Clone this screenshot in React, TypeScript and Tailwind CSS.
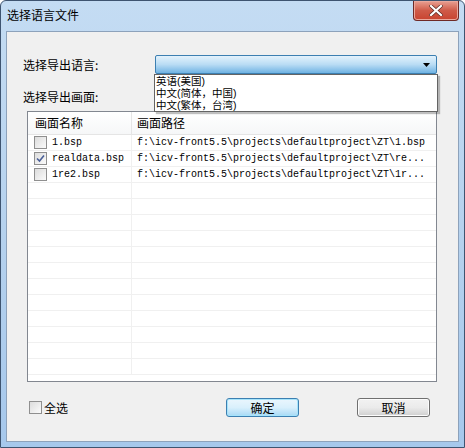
const cjk = "font-['Noto_Sans_CJK_SC',sans-serif]";
const mono = "font-['Liberation_Mono','Noto_Sans_CJK_SC',monospace]";
const list = "font-['Liberation_Sans','Noto_Sans_CJK_SC',sans-serif]";

const rows = [
  { name: '1.bsp', path: 'f:\\icv-front5.5\\projects\\defaultproject\\ZT\\1.bsp', checked: false },
  { name: 'realdata.bsp', path: 'f:\\icv-front5.5\\projects\\defaultproject\\ZT\\re...', checked: true },
  { name: '1re2.bsp', path: 'f:\\icv-front5.5\\projects\\defaultproject\\ZT\\1r...', checked: false },
];

const Check = ({ checked }: { checked?: boolean }) => (
  <div className="flex h-[13px] w-[13px] items-center justify-center border border-[#8f8f8f] bg-gradient-to-br from-[#dcdcdc] to-[#fbfbfb]">
    {checked && (
      <svg width="9" height="9" viewBox="0 0 9 9">
        <path d="M1 4.5 L3.5 7 L8 1.5" fill="none" stroke="#4a5f97" strokeWidth="1.6" />
      </svg>
    )}
  </div>
);

const Button = ({ label, focused }: { label: string; focused?: boolean }) => (
  <div
    className={`flex h-[19px] w-[73px] items-center justify-center rounded-[3px] border text-[12px] leading-none text-black ${cjk} ${
      focused
        ? 'border-[#3c7fb1] bg-gradient-to-b from-[#eaf6fd] via-[#d9f0fc] to-[#a7d9f5] shadow-[inset_0_0_0_1px_#a6e4fb]'
        : 'border-[#707070] bg-gradient-to-b from-[#f2f2f2] via-[#ebebeb] to-[#cfcfcf] shadow-[inset_0_0_0_1px_#fcfcfc]'
    }`}
  >
    {label}
  </div>
);

export default function App() {
  return (
    <div className="flex h-[448px] w-[465px] flex-col overflow-hidden rounded-t-[6px] border border-[#3e5470] bg-gradient-to-b from-[#c4dcf3] via-[#b6d2ee] to-[#a6c8ec]">
      {/* title bar */}
      <div className="flex h-[30px] shrink-0 items-start justify-between">
        <div className={`pl-[6px] pt-[5px] text-[12px] text-black ${cjk}`}>选择语言文件</div>
        <div className="mr-[5px] flex h-[20px] w-[46px] items-center justify-center rounded-b-[4px] border border-t-0 border-[#6e2a26] bg-gradient-to-b from-[#e8a093] via-[#cf5a48] to-[#c8432f] shadow-[inset_0_0_0_1px_#eaa89c]">
          <svg width="14" height="11" viewBox="0 0 14 11">
            <path d="M2 1 L12 10 M12 1 L2 10" stroke="#5b2a24" strokeWidth="3.6" strokeLinecap="square" />
            <path d="M2 1 L12 10 M12 1 L2 10" stroke="#ffffff" strokeWidth="2.2" strokeLinecap="square" />
          </svg>
        </div>
      </div>

      {/* client area */}
      <div className="relative mx-[5px] mb-[5px] flex flex-1 flex-col border border-[#8da2bb] bg-[#f0f0f0]">
        <div className="mt-[23px] flex items-center">
          <div className={`ml-[16px] w-[132px] text-[12px] text-black ${cjk}`}>选择导出语言:</div>
          <div className="relative flex h-[19px] w-[282px] items-center justify-end rounded-[2px] border border-[#3c7fb1] bg-gradient-to-b from-[#e3f2fc] via-[#b9dcf4] to-[#6fb3e3] pr-[6px]">
            <svg width="7" height="4" viewBox="0 0 7 4">
              <path d="M0 0 H7 L3.5 4 Z" fill="#000" />
            </svg>
          </div>
        </div>

        {/* dropdown list */}
        <div
          className={`absolute left-[147px] top-[42px] z-10 flex h-[38px] w-[284px] flex-col border border-[#646464] bg-white pl-[1px] text-[10.5px] leading-[12px] text-black shadow-[2px_2px_1px_rgba(0,0,0,0.25)] ${list}`}
        >
          <div className="h-[12px]">英语(美国)</div>
          <div className="h-[12px]">中文(简体，中国)</div>
          <div className="h-[12px]">中文(繁体，台湾)</div>
        </div>

        <div className={`ml-[16px] mt-[14px] text-[12px] text-black ${cjk}`}>选择导出画面:</div>

        {/* table */}
        <div className="ml-[20px] mt-[5px] flex h-[271px] w-[410px] flex-col overflow-hidden border border-[#828790] bg-white">
          <div className={`flex h-[23px] shrink-0 border-b border-[#e5e5e5] bg-gradient-to-b from-white to-[#f6f7f8] text-[12px] text-black ${cjk}`}>
            <div className="flex w-[104px] items-center border-r border-[#e5e5e5] pl-[7px]">画面名称</div>
            <div className="flex items-center pl-[5px]">画面路径</div>
          </div>
          {Array.from({ length: 15 }).map((_, i) => {
            const r = rows[i];
            return (
              <div key={i} className="flex h-[16px] shrink-0 border-b border-[#f0f0f0]">
                <div className="flex w-[104px] items-center gap-[5px] border-r border-[#f0f0f0] pl-[6px]">
                  {r && <Check checked={r.checked} />}
                  {r && <span className={`text-[10px] text-black ${mono}`}>{r.name}</span>}
                </div>
                <div className="flex items-center pl-[5px]">
                  {r && <span className={`whitespace-nowrap text-[10px] text-black ${mono}`}>{r.path}</span>}
                </div>
              </div>
            );
          })}
        </div>

        {/* bottom row */}
        <div className="mt-[16px] flex items-center">
          <div className="ml-[22px] flex w-[197px] items-center gap-[2px]">
            <Check />
            <span className={`text-[12px] text-black ${cjk}`}>全选</span>
          </div>
          <Button label="确定" focused />
          <div className="w-[58px]" />
          <Button label="取消" />
        </div>
      </div>
    </div>
  );
}
